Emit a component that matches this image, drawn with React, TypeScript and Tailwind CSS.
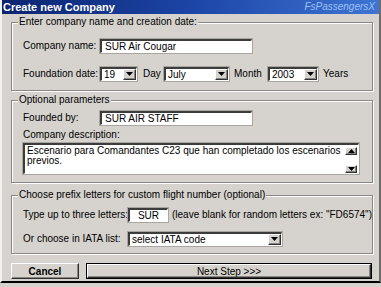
import React from "react";

const sunken =
  "border-t-2 border-l-2 border-b border-r border-t-[#3c3c3c] border-l-[#3c3c3c] border-b-white border-r-white bg-white shadow-[0_0_0_1px_#a9a6a0]";
const raised =
  "border border-t-white border-l-white border-r-[#303030] border-b-[#303030] bg-[#d6d3ce] shadow-[inset_-1px_-1px_0_#8a8782]";

function Arrow({ up = false }: { up?: boolean }) {
  return (
    <svg width="7" height="4" viewBox="0 0 7 4" className="block">
      {up ? <polygon points="0,4 7,4 3.5,0" fill="#000" /> : <polygon points="0,0 7,0 3.5,4" fill="#000" />}
    </svg>
  );
}

function Combo({ value, w }: { value: string; w: string }) {
  return (
    <div className={`${sunken} ${w} h-[14px] flex items-stretch`}>
      <span className="flex-1 pl-[2px] leading-[11px] whitespace-nowrap overflow-hidden">{value}</span>
      <div className={`${raised} w-[13px] flex items-center justify-center`}>
        <Arrow />
      </div>
    </div>
  );
}

function Group({ legend, className, children }: { legend: string; className?: string; children?: React.ReactNode }) {
  return (
    <fieldset
      className={`border border-[#8a8782] shadow-[inset_1px_1px_0_#fff,1px_1px_0_#fff] ${className ?? ""}`}
    >
      <legend className="ml-[6px] px-[1px] h-[12px] leading-[12px] bg-[#d6d3ce] whitespace-nowrap">{legend}</legend>
      {children}
    </fieldset>
  );
}

export default function App() {
  return (
    <div className="w-[381px] h-[287px] bg-[#d6d3ce] font-['Liberation_Sans',Arial,sans-serif] text-[10px] text-black overflow-hidden">
      <div className="h-[283px] flex flex-col border-b-2 border-b-black border-l-2 border-l-[#f4f2ee] border-r-2 border-r-[#6e6c68]">
        <div className="h-[14px] flex items-center justify-between bg-gradient-to-r from-[#0b2470] via-[#1c45a6] to-[#3f74d2] pl-[1px] pr-[4px]">
          <span className="text-white font-bold text-[11px] leading-none">Create new Company</span>
          <span className="text-[#9cc0f8] text-[10px] italic leading-none">FsPassengersX</span>
        </div>
        <div className="flex-1 flex flex-col pl-[9px] pr-[6px]">
          <Group legend="Enter company name and creation date:" className="mt-[2px] h-[75px]">
            <div className="flex items-center mt-[10px] pl-[11px] whitespace-nowrap">
              <span className="w-[77px]">Company name:</span>
              <div className={`${sunken} w-[152px] h-[14px] pl-[3px] leading-[11px]`}>SUR Air Cougar</div>
            </div>
            <div className="flex items-center mt-[13px] pl-[11px] whitespace-nowrap">
              <span className="w-[77px]">Foundation date:</span>
              <Combo value="19" w="w-[37px]" />
              <span className="w-[27px] pl-[6px]">Day</span>
              <Combo value="July" w="w-[65px]" />
              <span className="w-[39px] pl-[5px]">Month</span>
              <Combo value="2003" w="w-[50px]" />
              <span className="pl-[5px]">Years</span>
            </div>
          </Group>

          <Group legend="Optional parameters" className="mt-[3px] h-[89px]">
            <div className="flex items-center mt-[4px] pl-[11px] whitespace-nowrap">
              <span className="w-[77px]">Founded by:</span>
              <div className={`${sunken} w-[152px] h-[14px] pl-[3px] leading-[11px]`}>SUR AIR STAFF</div>
            </div>
            <div className="mt-[4px] pl-[11px] leading-[12px] whitespace-nowrap">Company description:</div>
            <div className={`${sunken} mt-[2px] ml-[11px] w-[336px] h-[31px] flex`}>
              <div className="flex-1 pl-[2px] pt-[1px] leading-[10px]">
                Escenario para Comandantes C23 que han completado los escenarios previos.
              </div>
              <div className="w-[12px] mr-[1px] flex flex-col justify-between pt-[2px]">
                <div className={`${raised} h-[8px] flex items-center justify-center`}>
                  <Arrow up />
                </div>
                <div className={`${raised} h-[8px] flex items-center justify-center`}>
                  <Arrow />
                </div>
              </div>
            </div>
          </Group>

          <Group legend="Choose prefix letters for custom flight number (optional)" className="mt-[6px] h-[65px]">
            <div className="flex items-center mt-[6px] pl-[11px] whitespace-nowrap">
              <span className="w-[105px]">Type up to three letters:</span>
              <div className={`${sunken} w-[40px] h-[14px] leading-[11px] text-center`}>SUR</div>
              <span className="pl-[4px]">(leave blank for random letters ex: "FD6574")</span>
            </div>
            <div className="flex items-center mt-[9px] pl-[11px] whitespace-nowrap">
              <span className="w-[105px]">Or choose in IATA list:</span>
              <Combo value="select IATA code" w="w-[154px]" />
            </div>
          </Group>

          <div className="flex mt-[9px]">
            <div className={`${raised} w-[68px] h-[16px] flex items-center justify-center font-bold`}>Cancel</div>
            <div className="ml-[7px] w-[286px] h-[16px] border border-black flex">
              <div className={`${raised} flex-1 flex items-center justify-center`}>Next Step &gt;&gt;&gt;</div>
            </div>
          </div>
        </div>
      </div>
    </div>
  );
}
